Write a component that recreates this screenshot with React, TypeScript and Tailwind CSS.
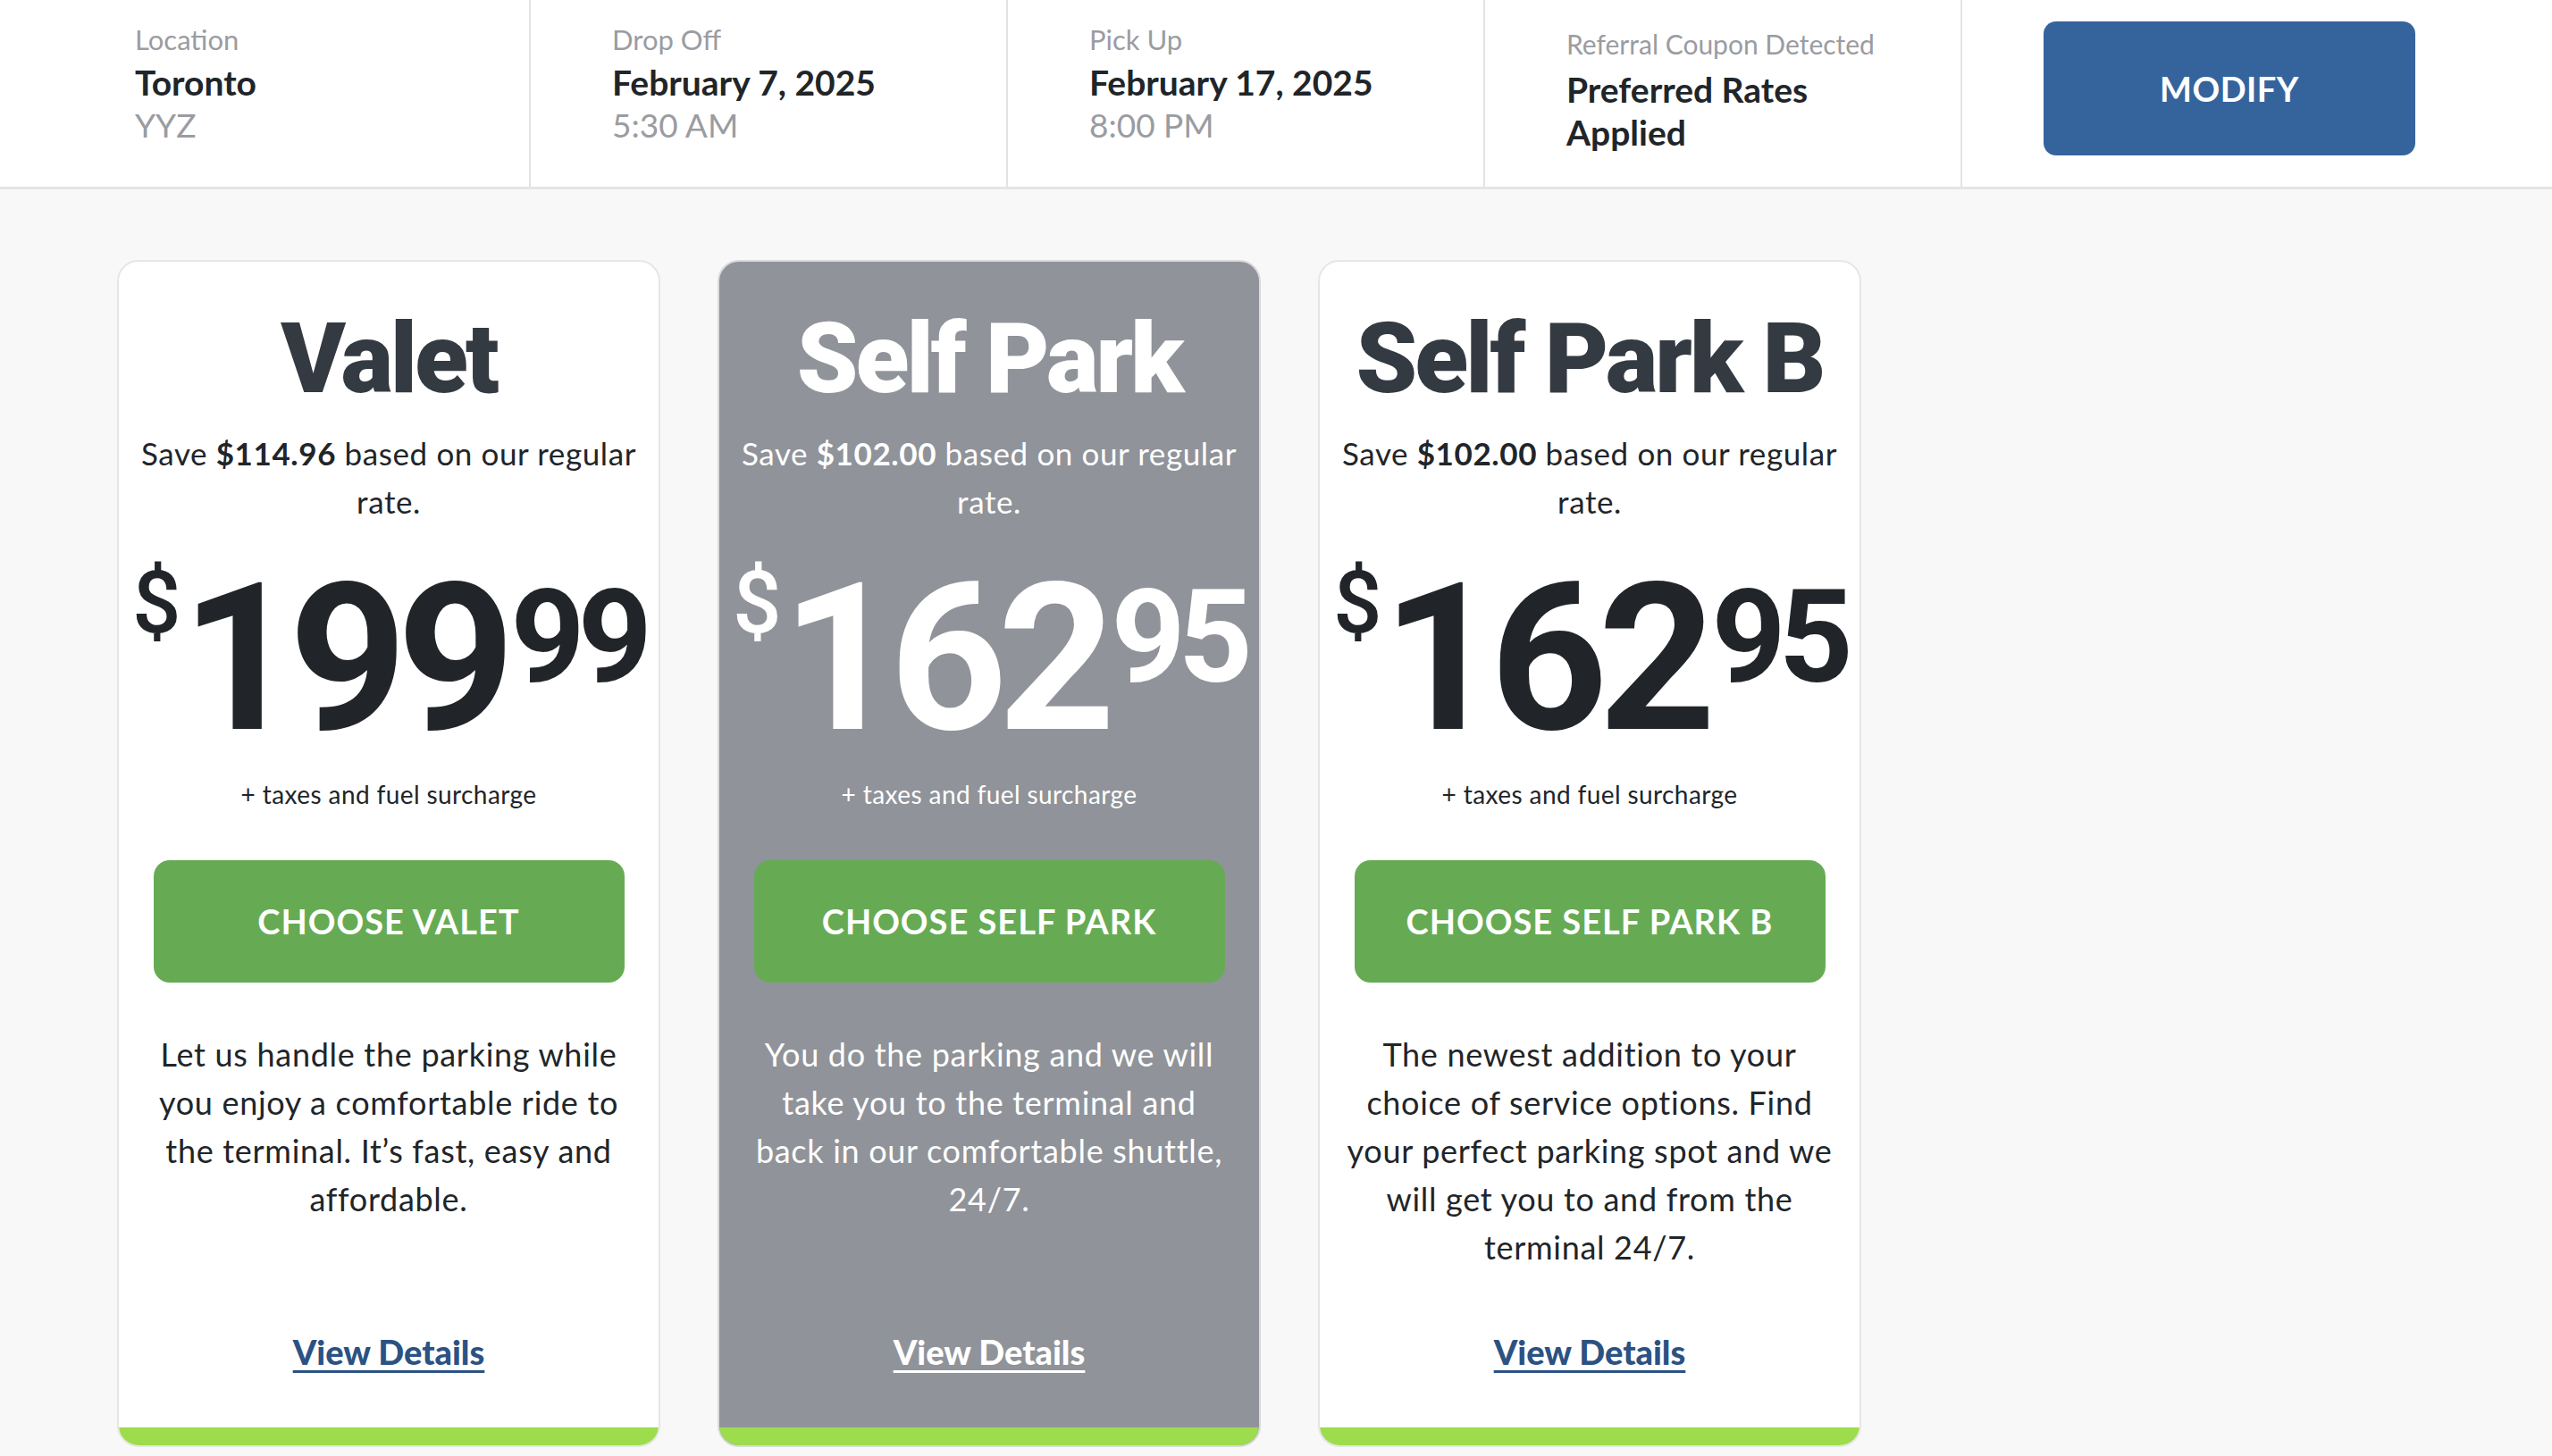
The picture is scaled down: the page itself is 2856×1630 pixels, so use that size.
import React from "react";

type Plan = {
  title: string;
  save: string;
  dollars: string;
  cents: string;
  button: string;
  desc: string[];
  featured?: boolean;
};

const plans: Plan[] = [
  {
    title: "Valet",
    save: "$114.96",
    dollars: "199",
    cents: "99",
    button: "CHOOSE VALET",
    desc: [
      "Let us handle the parking while",
      "you enjoy a comfortable ride to",
      "the terminal. It\u2019s fast, easy and",
      "affordable.",
    ],
  },
  {
    title: "Self Park",
    save: "$102.00",
    dollars: "162",
    cents: "95",
    button: "CHOOSE SELF PARK",
    desc: [
      "You do the parking and we will",
      "take you to the terminal and",
      "back in our comfortable shuttle,",
      "24/7.",
    ],
    featured: true,
  },
  {
    title: "Self Park B",
    save: "$102.00",
    dollars: "162",
    cents: "95",
    button: "CHOOSE SELF PARK B",
    desc: [
      "The newest addition to your",
      "choice of service options. Find",
      "your perfect parking spot and we",
      "will get you to and from the",
      "terminal 24/7.",
    ],
  },
];

function HeaderCol({
  label,
  value,
  sub,
}: {
  label: string;
  value: string;
  sub: string;
}) {
  return (
    <div className="w-[534px] h-full border-r-2 border-[#e3e3e3] pl-[91px] pt-[20px]">
      <div className="text-[31px] leading-[48px] text-[#9a9ca1]">{label}</div>
      <div className="text-[39px] leading-[48px] font-bold text-[#212529]">{value}</div>
      <div className="text-[37px] leading-[48px] text-[#9a9ca1]">{sub}</div>
    </div>
  );
}

function Card({ p }: { p: Plan }) {
  const f = p.featured;
  return (
    <div
      className={
        "w-[608px] h-[1329px] rounded-[24px] border-2 overflow-hidden flex flex-col items-center " +
        (f ? "bg-[#909399] border-[#d9dadc] text-white" : "bg-white border-[#e6e6e6] text-[#212529]")
      }
    >
      <div
        className={
          "mt-[54px] font-['Roboto'] font-black text-[110px] leading-none tracking-[-3px] " +
          (f ? "text-white" : "text-[#343a42]")
        }
      >
        {p.title}
      </div>
      <div className="mt-[23px] px-[12px] text-center text-[35px] leading-[54px] tracking-[0.6px]">
        Save <span className="font-bold">{p.save}</span> based on our regular rate.
      </div>
      <div className="mt-[35px] flex items-start justify-center font-['Roboto']">
        <span className="mt-[4px] text-[96px] leading-none font-medium">$</span>
        <span className="text-[230px] leading-none font-bold tracking-[-11px]">{p.dollars}</span>
        <span className="mt-[18px] ml-[6px] text-[145px] leading-none font-bold tracking-[-8px]">
          {p.cents}
        </span>
      </div>
      <div className="mt-[16px] text-[28px] leading-[40px] tracking-[0.4px]">+ taxes and fuel surcharge</div>
      <button className="mt-[54px] w-[527px] h-[137px] rounded-[18px] bg-[#66ab54] text-white text-[38px] font-bold tracking-[1px]">
        {p.button}
      </button>
      <div className="mt-[53px] text-center text-[36px] leading-[54px] tracking-[0.7px]">
        {p.desc.map((l) => (
          <div key={l} className="whitespace-nowrap">
            {l}
          </div>
        ))}
      </div>
      <a
        href="#"
        className={
          "mt-auto mb-[56px] text-[38px] leading-[57px] font-black underline decoration-[3px] underline-offset-[6px] " +
          (f ? "text-white" : "text-[#2b5283]")
        }
      >
        View Details
      </a>
      <div className="w-full h-[20px] shrink-0 bg-[#9ddc4c]" />
    </div>
  );
}

export default function App() {
  return (
    <div className="min-h-screen w-full bg-[#f8f8f8] font-['Lato',sans-serif]">
      <header className="h-[212px] bg-white border-b-[3px] border-[#e4e4e4] flex pl-[60px]">
        <HeaderCol label="Location" value="Toronto" sub="YYZ" />
        <HeaderCol label="Drop Off" value="February 7, 2025" sub="5:30 AM" />
        <HeaderCol label="Pick Up" value="February 17, 2025" sub="8:00 PM" />
        <div className="w-[534px] h-full border-r-2 border-[#e3e3e3] pl-[91px] pt-[25px]">
          <div className="text-[30px] leading-[48px] mb-[3px] text-[#9a9ca1]">Referral Coupon Detected</div>
          <div className="text-[39px] leading-[48px] font-bold text-[#212529]">Preferred Rates</div>
          <div className="text-[39px] leading-[48px] font-bold text-[#212529]">Applied</div>
        </div>
        <div className="pl-[91px] pt-[24px]">
          <button className="w-[416px] h-[150px] rounded-[14px] bg-[#35649d] text-white text-[38px] font-bold tracking-[0.5px]">
            MODIFY
          </button>
        </div>
      </header>
      <main className="flex gap-[64px] pl-[131px] pt-[79px] pb-[10px]">
        {plans.map((p) => (
          <Card key={p.title} p={p} />
        ))}
      </main>
    </div>
  );
}
